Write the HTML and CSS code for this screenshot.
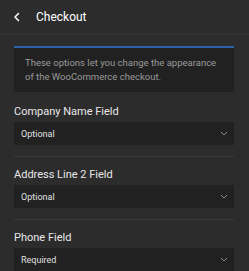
FILE: index.html
```html
<!DOCTYPE html>
<html lang="en">
<head>
  <meta charset="utf-8">
  <title>Checkout</title>
  <link rel="stylesheet" href="styles.css">
</head>
<body>
  <div class="header">
    <button class="back-btn" aria-label="Back">
      <svg width="8" height="10" viewBox="0 0 8 10"><path d="M5.5 1.5 L2 5 L5.5 8.5" fill="none" stroke="#ffffff" stroke-width="1.5" stroke-linecap="round" stroke-linejoin="round"/></svg>
    </button>
    <div class="title">Checkout</div>
  </div>

  <div class="content">
    <div class="notice">
      These options let you change the appearance of the WooCommerce checkout.
    </div>

    <div class="field">
      <div class="field-label">Company Name Field</div>
      <div class="select">
        <span class="select-value">Optional</span>
        <svg class="chevron" width="8" height="5" viewBox="0 0 8 5"><path d="M1 1 L4 4 L7 1" fill="none" stroke="#8a8a8a" stroke-width="1"/></svg>
      </div>
    </div>

    <div class="field">
      <div class="field-label">Address Line 2 Field</div>
      <div class="select">
        <span class="select-value">Optional</span>
        <svg class="chevron" width="8" height="5" viewBox="0 0 8 5"><path d="M1 1 L4 4 L7 1" fill="none" stroke="#8a8a8a" stroke-width="1"/></svg>
      </div>
    </div>

    <div class="field">
      <div class="field-label">Phone Field</div>
      <div class="select">
        <span class="select-value">Required</span>
        <svg class="chevron" width="8" height="5" viewBox="0 0 8 5"><path d="M1 1 L4 4 L7 1" fill="none" stroke="#8a8a8a" stroke-width="1"/></svg>
      </div>
    </div>
  </div>
</body>
</html>
```

FILE: styles.css
```css
* {
  margin: 0;
  padding: 0;
  box-sizing: border-box;
}

body {
  font-family: Roboto, 'Liberation Sans', sans-serif;
  background-color: #2c2c2c;
  color: #e6e6e6;
  overflow: hidden;
}

.header {
  display: flex;
  align-items: center;
  height: 35px;
  padding: 0 12px;
  border-bottom: 1px solid #333333;
}

.back-btn {
  background: none;
  border: none;
  width: 8px;
  height: 10px;
  display: flex;
  align-items: center;
  justify-content: center;
  margin-left: 1px;
  margin-right: 15px;
  cursor: pointer;
}

.title {
  font-size: 12px;
  font-weight: 400;
  color: #ffffff;
}

.content {
  padding: 11px 15px 0 14px;
}

.notice {
  background: #212121;
  border-top: 2px solid #2d60a8;
  padding: 8px 8px 8px 11px;
  font-size: 9.5px;
  line-height: 14px;
  color: #9a9a9a;
}

.field {
  padding: 13px 0 11px;
  border-bottom: 1px solid #3a3a3a;
}

.field + .field {
  padding-top: 11px;
}

.field-label {
  font-size: 11px;
  line-height: 14px;
  color: #e8e8e8;
  margin-bottom: 3px;
}

.select {
  display: flex;
  align-items: center;
  justify-content: space-between;
  height: 23px;
  padding: 0 6px 0 7px;
  background: #212121;
}

.select-value {
  font-size: 9px;
  font-weight: 400;
  color: #e0e0e0;
}

.chevron {
  display: block;
}
```
